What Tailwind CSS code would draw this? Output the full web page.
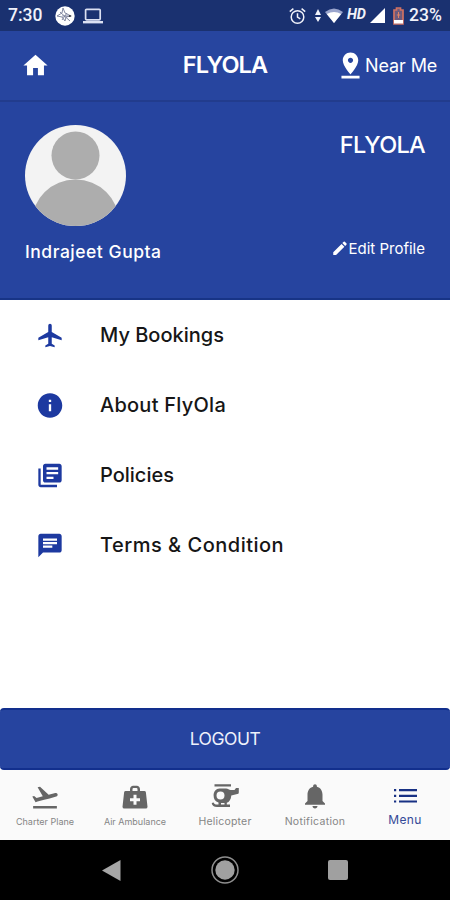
<!DOCTYPE html>
<html lang="en">
<head>
<meta charset="utf-8">
<meta name="viewport" content="width=device-width, initial-scale=1">
<title>FLYOLA</title>
<script src="https://cdn.jsdelivr.net/npm/@tailwindcss/browser@4"></script>
</head>
<body class="w-[450px] h-[900px] overflow-hidden bg-white font-['Inter',sans-serif] flex flex-col">
  <!-- Status bar -->
  <div class="h-[31px] shrink-0 bg-[#1a3170] flex items-center pl-2 pr-[7px] text-[#f0f2fa] font-['Roboto',sans-serif] font-medium">
    <span class="text-[17.5px] w-[47px] leading-none pt-px">7:30</span>
    <svg class="w-5 h-5" viewBox="0 0 20 20"><circle cx="10" cy="10" r="9.7" fill="#fff"/><path d="M8 2l2 5 6 3-5 1-1 4-3-4-5-1 5-3zM5 6l10 9M7 10h9M7 14l5-7" fill="none" stroke="#777e98" stroke-width=".9"/><path d="M14 9l3 1-3 1z" fill="#333"/></svg>
    <svg class="w-5 h-4 ml-2" viewBox="0 0 20 16" fill="none" stroke="#dbe0f2" stroke-width="1.7"><rect x="2.6" y="1.3" width="14.6" height="10.5" rx="1"/><path d="M0 14.2h20" stroke-width="2.4"/></svg>
    <svg class="w-[18px] h-[18px] ml-auto" viewBox="0 0 18 18" fill="none" stroke="#f0f2fa" stroke-width="1.5"><circle cx="9.500" cy="10" r="6.3"/><path d="M9.500 6.2v4l2.8 1.7M1.800 4.6l3.6-3M17.200 4.6l-3.6-3"/></svg>
    <svg class="w-[6px] h-[14px] ml-[9px]" viewBox="0 0 6 14" fill="#f0f2fa"><path d="M3 0l3 6H0zM3 13l3-5H0z"/></svg>
    <svg class="w-[18px] h-[15px] ml-1" viewBox="0 0 18 15"><path d="M0 4Q9-3 18 4L9 15z" fill="#9aa5cd"/><path d="M1.800 6Q9 2 16.200 6L9 15z" fill="#fff"/></svg>
    <span class="ml-[4px] w-[19px] text-[14.500px] italic font-bold leading-none tracking-[-0.3px]">HD</span>
    <svg class="w-[15px] h-[15px] ml-[4px]" viewBox="0 0 15 15"><path d="M15 0v15H0z" fill="#fff"/></svg>
    <svg class="w-[11px] h-[18px] ml-[8px]" viewBox="0 0 11 18"><path d="M3.500 1h4v2H10v14H1V3h2.500z" fill="#6d5a7c" stroke="#cf7162" stroke-width="1.700"/><path d="M1 13h9v3.500H1z" fill="#fff"/><path d="M5.500 5v6M3.800 8h3.400" stroke="#e08367"/></svg>
    <span class="ml-[5px] w-[34px] text-[17.500px] leading-none pt-px whitespace-nowrap">23%</span>
  </div>

  <!-- App bar -->
  <header class="h-[71px] shrink-0 bg-[#27459f] border-b-2 border-[#223c8d] grid grid-cols-[150px_150px_150px] items-center text-white">
    <svg class="w-[29px] h-[29px] ml-[21px]" viewBox="0 0 24 24" fill="#fff"><path d="M10 20v-6h4v6h5v-8h3L12 3 2 12h3v8z"/></svg>
    <h1 class="text-[23.5px] font-semibold leading-none text-center whitespace-nowrap tracking-[-0.9px] pb-[2px]">FLYOLA</h1>
    <div class="flex items-center pl-[35px]">
      <svg class="w-[31px] h-[31px]" viewBox="0 0 24 24" fill="#fff"><path d="M18 8c0-3.310-2.690-6-6-6S6 4.690 6 8c0 4.500 6 11 6 11s6-6.500 6-11zm-8 0c0-1.100.9-2 2-2s2 .9 2 2-.89 2-2 2c-1.100 0-2-.9-2-2zM5 20v2h14v-2H5z"/></svg>
      <span class="text-[18px] leading-none whitespace-nowrap tracking-[-0.1px] -ml-px">Near Me</span>
    </div>
  </header>

  <!-- Profile -->
  <section class="h-[198px] shrink-0 bg-[#26449f] border-b-2 border-[#173486] flex justify-between pl-[25px] pr-[25px] pt-[23px] text-white">
    <div class="flex flex-col">
      <svg class="w-[101px] h-[101px]" viewBox="0 0 101 101"><defs><clipPath id="avatar"><circle cx="50.500" cy="50.500" r="50.500"/></clipPath></defs><g clip-path="url(#avatar)"><path fill="#f3f3f3" d="M0 0h101v101H0z"/><circle cx="50.500" cy="30.500" r="24" fill="#adadad"/><ellipse cx="50.500" cy="97" rx="43.500" ry="42.500" fill="#adadad"/></g></svg>
      <span class="mt-[17px] text-[17.500px] font-medium leading-none whitespace-nowrap tracking-[0.520px]">Indrajeet Gupta</span>
    </div>
    <div class="flex flex-col items-end">
      <span class="mt-[8px] text-[23.500px] font-medium leading-none tracking-[-0.7px]">FLYOLA</span>
      <div class="flex items-center mt-[83px]">
        <svg class="w-[18px] h-[18px]" viewBox="0 0 24 24" fill="#fff"><path d="M3 16.250V20h3.750L17.810 8.940l-3.750-3.750L3 16.250zM20.710 6.040c.39-.39.39-1.020 0-1.410l-2.340-2.340a1 1 0 0 0-1.410 0l-1.830 1.830 3.750 3.750 1.830-1.830z"/></svg>
        <span class="text-[15px] leading-none whitespace-nowrap">Edit Profile</span>
      </div>
    </div>
  </section>

  <!-- Menu list -->
  <nav class="flex-1 text-[20px] font-[450] text-[#161616] fill-[#1d39a0] [&_div]:h-[70px] [&_div]:flex [&_div]:items-center [&_div]:pl-[36px] [&_div]:gap-[36px] [&_svg]:w-[28px] [&_svg]:h-[29px]">
    <div><svg viewBox="0 0 24 24"><path d="M22 16v-2l-8.500-5V3.500a1.500 1.500 0 0 0-3 0V9L2 14v2l8.500-2.500V19L8 20.500V22l4-1 4 1v-1.500L13.500 19v-5.500L22 16z"/></svg><span>My Bookings</span></div>
    <div><svg class="mt-px" viewBox="0 0 24 24"><path d="M12 1.500C6.200 1.500 1.500 6.200 1.500 12S6.200 22.500 12 22.500 22.500 17.800 22.500 12 17.800 1.500 12 1.500zm1 15.500h-2v-6h2v6zm0-8h-2V7h2v2z"/></svg><span class="tracking-[0.250px]">About FlyOla</span></div>
    <div><svg viewBox="0 0 24 24"><path d="M4 6H2v14c0 1.100.9 2 2 2h14v-2H4V6zm16-4H8c-1.100 0-2 .9-2 2v12c0 1.100.9 2 2 2h12c1.100 0 2-.9 2-2V4c0-1.100-.9-2-2-2zm-1 9H9V9h10v2zm-4 4H9v-2h6v2zm4-8H9V5h10v2z"/></svg><span>Policies</span></div>
    <div><svg viewBox="0 0 24 24"><path d="M20 2H4c-1.100 0-1.990.9-1.990 2L2 22l4-4h14c1.100 0 2-.9 2-2V4c0-1.100-.9-2-2-2zM6 9h12v2H6V9zm8 5H6v-2h8v2zm4-6H6V6h12v2z"/></svg><span class="tracking-[0.500px]">Terms &amp; Condition</span></div>
  </nav>

  <button class="h-[62px] shrink-0 rounded-[4px] bg-[#26449f] border-y-2 border-[#122f8d] text-[#eef1fb] text-[17.500px] leading-none text-center"><span class="tracking-[-0.5px]">LOGOUT</span></button>

  <!-- Bottom tabs -->
  <nav class="h-[70px] shrink-0 bg-[#fafafa] grid grid-cols-5 text-[#858585] [&>div]:flex [&>div]:flex-col [&>div]:items-center [&>div]:pt-[11px] [&_span]:leading-none [&_span]:whitespace-nowrap [&_svg]:w-[30px] [&_svg]:h-[30px]">
    <div><svg viewBox="0 0 24 24" fill="#666"><path d="M2.500 20h19v2h-19zM22.070 10.640c-.21-.8-1.040-1.280-1.840-1.060L14.920 11l-6.900-6.430-1.930.51 4.140 7.170-4.970 1.330-1.970-1.540-1.450.39 1.820 3.160.77 1.330 1.600-.43 5.310-1.420 4.350-1.160L21 12.490c.81-.23 1.280-1.050 1.070-1.850z"/></svg><span class="text-[9px] mt-[6px]">Charter Plane</span></div>
    <div><svg viewBox="0 0 24 24" fill="#666"><path fill-rule="evenodd" d="M8 8V6.500C8 4.700 9.200 3.700 10.500 3.700h3C14.800 3.700 16 4.700 16 6.500V8h3.500q1 0 1.200 1L22 20.500q0 1.500-1.500 1.500h-17Q2 22 2 20.500L3.300 9q.2-1 1.200-1zm2 0h4V6.500q0-.9-.8-.9h-2.400q-.8 0-.8.900zm.8 3v2.800H8v2.400h2.800V19h2.400v-2.800H16v-2.400h-2.800V11z"/></svg><span class="text-[9px] mt-[6px]">Air Ambulance</span></div>
    <div><svg viewBox="0 0 30 30" fill="#666"><path fill-rule="evenodd" d="M4.500 3.300h16.500v2.200H4.500zM9.500 7.500h6.500c2.200 0 3 1.500 4.500 1.500h4L26 7h2.800v4.500q0 1.500-1.500 1.500l-6 1.500c-.3 4-2 6.500-4.500 7.300v1.700H20V26H7c-3 0-5-1.500-5.300-4l2-.500c.5 1.500 1.300 2 3.300 2h1.500v-2C5.200 20.500 3.600 18.300 3.600 14.500c0-4 2.500-7 5.900-7zM10.500 10.500a4 4 0 1 0 0 8 4 4 0 0 0 0-8zM11 22v1.500h3.500V22z"/></svg><span class="text-[10.500px] mt-[6px] tracking-[0.2px]">Helicopter</span></div>
    <div><svg viewBox="0 0 24 24" fill="#666"><path d="M12 22c1.100 0 2-.9 2-2h-4c0 1.100.89 2 2 2zm6-6v-5c0-3.070-1.640-5.640-4.500-6.320V4c0-.83-.67-1.500-1.500-1.500s-1.500.67-1.500 1.500v.68C7.630 5.360 6 7.920 6 11v5l-2 2v1h16v-1l-2-2z"/></svg><span class="text-[10.500px] mt-[6px] tracking-[0.3px]">Notification</span></div>
    <div><svg viewBox="0 0 30 30" fill="#183184"><path d="M4 8h2.200v2.200H4zM9 8h18v2.200H9zM4 13.700h2.200v2.200H4zM9 13.700h18v2.200H9zM4 19.400h2.200v2.200H4zM9 19.400h18v2.200H9z"/></svg><span class="text-[12px] mt-[3px] text-[#344998] tracking-[0.4px]">Menu</span></div>
  </nav>

  <!-- System navigation -->
  <div class="h-[60px] shrink-0 bg-black flex items-center justify-between pl-[102px] pr-[102px]">
    <svg class="w-[19px] h-[21px]" viewBox="0 0 19 21"><path d="M18.500 0v21L0 10.500z" fill="#a6a6a6"/></svg>
    <svg class="w-[28px] h-[28px]" viewBox="0 0 28 28"><circle cx="14" cy="14" r="13" fill="none" stroke="#8e8e8e" stroke-width="1.500"/><circle cx="14" cy="14" r="9.700" fill="#a0a0a0"/></svg>
    <svg class="w-5 h-5" viewBox="0 0 20 20"><rect width="20" height="20" rx="2" fill="#a0a0a0"/></svg>
  </div>
</body>
</html>
